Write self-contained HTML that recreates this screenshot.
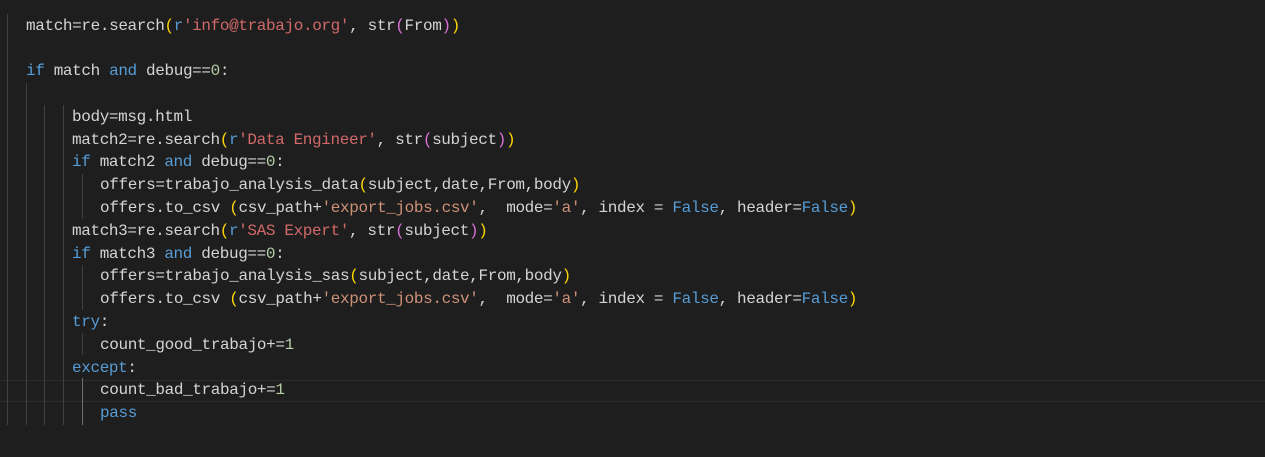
<!DOCTYPE html>
<html><head><meta charset="utf-8"><style>
html,body{margin:0;padding:0;background:#1e1e1e;width:1265px;height:457px;overflow:hidden}
.l{position:absolute;height:22.8px;line-height:22.8px;font-family:"Liberation Mono",monospace;font-size:16px;letter-spacing:-0.37px;color:#d4d4d4;white-space:pre;margin-top:1px}
.k{color:#569cd6}.r{color:#d16969}.s{color:#ce9178}.n{color:#b5cea8}.y{color:#ffd700}.p{color:#da70d6}
.g{position:absolute;width:1px;background:#404040}
.h{position:absolute;left:0;width:1265px;height:1px;background:#2c2c2c}
</style></head><body>
<div class="h" style="top:380px"></div><div class="h" style="top:401px"></div>
<div class="g" style="left:7px;top:14px;height:411px"></div>
<div class="g" style="left:26px;top:83px;height:342px"></div>
<div class="g" style="left:44px;top:105px;height:320px"></div>
<div class="g" style="left:63px;top:105px;height:320px"></div>
<div class="g" style="left:82px;top:174px;height:45px"></div>
<div class="g" style="left:82px;top:265px;height:45px"></div>
<div class="g" style="left:82px;top:333px;height:22px"></div>
<div class="g" style="left:82px;top:378px;height:47px;background:#707070"></div>

<div class="l" style="left:26px;top:13.6px">match=re.search<span class="y">(</span><span class="k">r</span><span class="r">'info@trabajo.org'</span>, str<span class="p">(</span>From<span class="p">)</span><span class="y">)</span></div>
<div class="l" style="left:26px;top:59.2px"><span class="k">if</span> match <span class="k">and</span> debug==<span class="n">0</span>:</div>
<div class="l" style="left:72px;top:104.8px">body=msg.html</div>
<div class="l" style="left:72px;top:127.6px">match2=re.search<span class="y">(</span><span class="k">r</span><span class="r">'Data Engineer'</span>, str<span class="p">(</span>subject<span class="p">)</span><span class="y">)</span></div>
<div class="l" style="left:72px;top:150.4px"><span class="k">if</span> match2 <span class="k">and</span> debug==<span class="n">0</span>:</div>
<div class="l" style="left:100px;top:173.2px">offers=trabajo_analysis_data<span class="y">(</span>subject,date,From,body<span class="y">)</span></div>
<div class="l" style="left:100px;top:196px">offers.to_csv <span class="y">(</span>csv_path+<span class="s">'export_jobs.csv'</span>,  mode=<span class="s">'a'</span>, index = <span class="k">False</span>, header=<span class="k">False</span><span class="y">)</span></div>
<div class="l" style="left:72px;top:218.8px">match3=re.search<span class="y">(</span><span class="k">r</span><span class="r">'SAS Expert'</span>, str<span class="p">(</span>subject<span class="p">)</span><span class="y">)</span></div>
<div class="l" style="left:72px;top:241.6px"><span class="k">if</span> match3 <span class="k">and</span> debug==<span class="n">0</span>:</div>
<div class="l" style="left:100px;top:264.4px">offers=trabajo_analysis_sas<span class="y">(</span>subject,date,From,body<span class="y">)</span></div>
<div class="l" style="left:100px;top:287.2px">offers.to_csv <span class="y">(</span>csv_path+<span class="s">'export_jobs.csv'</span>,  mode=<span class="s">'a'</span>, index = <span class="k">False</span>, header=<span class="k">False</span><span class="y">)</span></div>
<div class="l" style="left:72px;top:310px"><span class="k">try</span>:</div>
<div class="l" style="left:100px;top:332.8px">count_good_trabajo+=<span class="n">1</span></div>
<div class="l" style="left:72px;top:355.6px"><span class="k">except</span>:</div>
<div class="l" style="left:100px;top:378.4px">count_bad_trabajo+=<span class="n">1</span></div>
<div class="l" style="left:100px;top:401.2px"><span class="k">pass</span></div>
</body></html>
